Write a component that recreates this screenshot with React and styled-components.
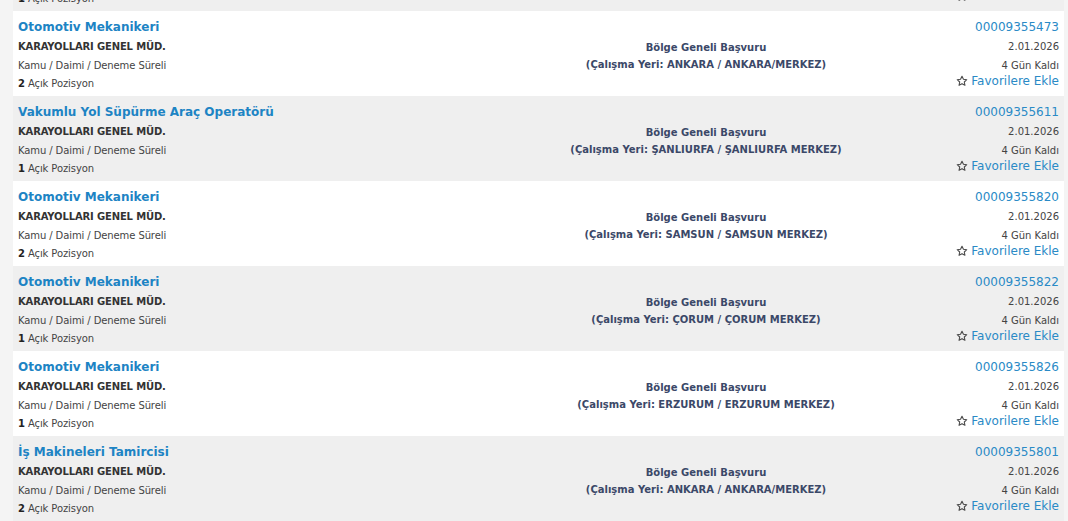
import React from "react";
import styled, { createGlobalStyle } from "styled-components";

const Global = createGlobalStyle`
  body {
    margin: 0;
    background: #f3f3f3;
    font-family: "DejaVu Sans", Verdana, sans-serif;
    overflow: hidden;
  }
`;

const Page = styled.div`
  width: 1068px;
  height: 521px;
  overflow: hidden;
  background: #f4f4f4;
`;

const List = styled.div`
  margin: -74px 4px 0 13px;
  display: flex;
  flex-direction: column;
`;

const Row = styled.div`
  height: 85px;
  box-sizing: border-box;
  padding: 6px 5px 2px;
  display: grid;
  grid-template-columns: 450px 476px 1fr;
  background: ${(p) => (p.odd ? "#efefef" : "#ffffff")};
`;

const Left = styled.div`
  display: flex;
  flex-direction: column;
`;

const Title = styled.a`
  font-size: 12px;
  font-weight: bold;
  line-height: 20px;
  color: #1d84c4;
  text-decoration: none;
  white-space: nowrap;
`;

const Company = styled.div`
  font-size: 10px;
  font-weight: bold;
  line-height: 19px;
  color: #333;
  letter-spacing: -0.15px;
`;

const Meta = styled.div`
  font-size: 10px;
  line-height: ${(p) => p.lh || 19}px;
  color: #444;
  letter-spacing: -0.1px;
  b {
    color: #222;
  }
`;

const Center = styled.div`
  align-self: center;
  text-align: center;
  font-size: 10px;
  font-weight: bold;
  line-height: 17px;
  color: #3b4868;
`;

const Right = styled.div`
  display: flex;
  flex-direction: column;
  align-items: flex-end;
  white-space: nowrap;
`;

const Code = styled.div`
  font-size: 12px;
  line-height: 20px;
  color: #2a8ac6;
`;

const Small = styled.div`
  font-size: 10px;
  line-height: 19px;
  color: #444;
`;

const Fav = styled.a`
  display: flex;
  align-items: center;
  gap: 3px;
  margin-top: -2px;
  font-size: 12px;
  line-height: 16px;
  color: #2a8ac6;
  text-decoration: none;
  svg {
    width: 12px;
    height: 12px;
  }
`;

const Star = () => (
  <svg viewBox="0 0 24 24" fill="none" stroke="#4a4a4a" strokeWidth="2.2" strokeLinejoin="round">
    <path d="M12 2.5l2.9 6.1 6.6.8-4.9 4.6 1.3 6.6L12 17.3l-5.9 3.3 1.3-6.6-4.9-4.6 6.6-.8z" />
  </svg>
);

const jobs = [
  { title: "Otomotiv Mekanikeri", open: 1, place: "ANKARA / ANKARA/MERKEZ", code: "00009355470" },
  { title: "Otomotiv Mekanikeri", open: 2, place: "ANKARA / ANKARA/MERKEZ", code: "00009355473" },
  { title: "Vakumlu Yol Süpürme Araç Operatörü", open: 1, place: "ŞANLIURFA / ŞANLIURFA MERKEZ", code: "00009355611" },
  { title: "Otomotiv Mekanikeri", open: 2, place: "SAMSUN / SAMSUN MERKEZ", code: "00009355820" },
  { title: "Otomotiv Mekanikeri", open: 1, place: "ÇORUM / ÇORUM MERKEZ", code: "00009355822" },
  { title: "Otomotiv Mekanikeri", open: 1, place: "ERZURUM / ERZURUM MERKEZ", code: "00009355826" },
  { title: "İş Makineleri Tamircisi", open: 2, place: "ANKARA / ANKARA/MERKEZ", code: "00009355801" },
];

const App = () => {
  return (
    <Page>
      <Global />
      <List>
        {jobs.map((j, i) => (
          <Row key={i} odd={i % 2 === 0}>
            <Left>
              <Title href="#">{j.title}</Title>
              <Company>KARAYOLLARI GENEL MÜD.</Company>
              <Meta>Kamu / Daimi / Deneme Süreli</Meta>
              <Meta lh={18}>
                <b>{j.open}</b> Açık Pozisyon
              </Meta>
            </Left>
            <Center>
              Bölge Geneli Başvuru
              <br />
              (Çalışma Yeri: {j.place})
            </Center>
            <Right>
              <Code>{j.code}</Code>
              <Small>2.01.2026</Small>
              <Small>4 Gün Kaldı</Small>
              <Fav href="#">
                <Star />
                Favorilere Ekle
              </Fav>
            </Right>
          </Row>
        ))}
      </List>
    </Page>
  );
};

export default App;
